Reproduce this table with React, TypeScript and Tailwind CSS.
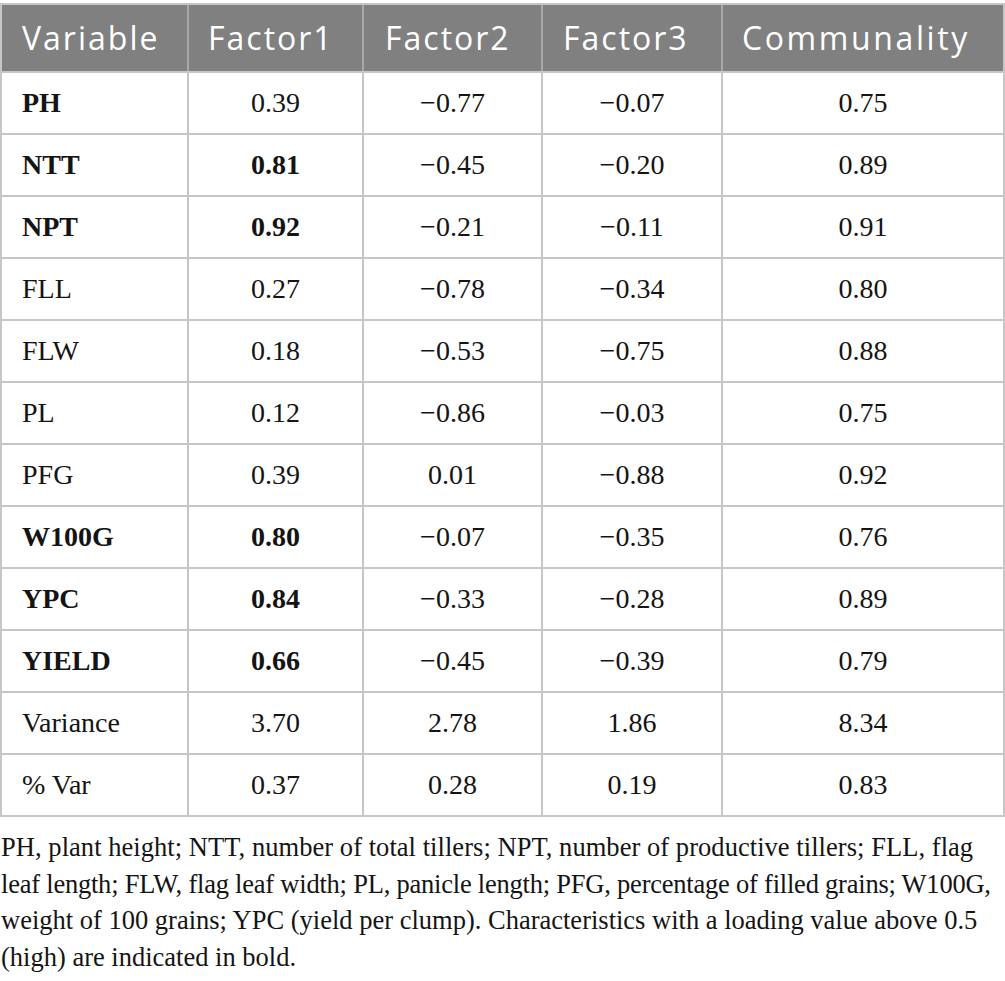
import React from "react";

type Row = { v: string; bold?: boolean; f1: string; f1b?: boolean; f2: string; f3: string; c: string };

const rows: Row[] = [
  { v: "PH", bold: true, f1: "0.39", f2: "\u22120.77", f3: "\u22120.07", c: "0.75" },
  { v: "NTT", bold: true, f1: "0.81", f1b: true, f2: "\u22120.45", f3: "\u22120.20", c: "0.89" },
  { v: "NPT", bold: true, f1: "0.92", f1b: true, f2: "\u22120.21", f3: "\u22120.11", c: "0.91" },
  { v: "FLL", f1: "0.27", f2: "\u22120.78", f3: "\u22120.34", c: "0.80" },
  { v: "FLW", f1: "0.18", f2: "\u22120.53", f3: "\u22120.75", c: "0.88" },
  { v: "PL", f1: "0.12", f2: "\u22120.86", f3: "\u22120.03", c: "0.75" },
  { v: "PFG", f1: "0.39", f2: "0.01", f3: "\u22120.88", c: "0.92" },
  { v: "W100G", bold: true, f1: "0.80", f1b: true, f2: "\u22120.07", f3: "\u22120.35", c: "0.76" },
  { v: "YPC", bold: true, f1: "0.84", f1b: true, f2: "\u22120.33", f3: "\u22120.28", c: "0.89" },
  { v: "YIELD", bold: true, f1: "0.66", f1b: true, f2: "\u22120.45", f3: "\u22120.39", c: "0.79" },
  { v: "Variance", f1: "3.70", f2: "2.78", f3: "1.86", c: "8.34" },
  { v: "% Var", f1: "0.37", f2: "0.28", f3: "0.19", c: "0.83" },
];

const serif = "font-['Liberation_Serif',serif]";

export default function App() {
  return (
    <div className="w-[1005px] bg-white pt-[3px]">
      <div className="border-l-2 border-t-2 border-[#c6c6c6]">
        <div className="flex h-[68px] border-b-2 border-[#c6c6c6] bg-[#808080] text-white font-['Open_Sans',sans-serif] text-[32px] tracking-[2px]">
          <div className="w-[187px] flex items-center pl-[20px] border-r-2 border-[#a8a8a8]">Variable</div>
          <div className="w-[175px] flex items-center pl-[19px] border-r-2 border-[#a8a8a8]">Factor1</div>
          <div className="w-[179px] flex items-center pl-[21px] border-r-2 border-[#a8a8a8]">Factor2</div>
          <div className="w-[180px] flex items-center pl-[20px] border-r-2 border-[#a8a8a8]">Factor3</div>
          <div className="w-[282px] flex items-center pl-[19px] border-r-2 border-[#c6c6c6] tracking-[2.6px]">Communality</div>
        </div>
        {rows.map((r) => (
          <div key={r.v} className={`flex h-[62px] border-b-2 border-[#c6c6c6] text-[28px] text-[#141414] ${serif}`}>
            <div className={`w-[187px] flex items-center pl-[20px] border-r-2 border-[#c6c6c6] ${r.bold ? "font-bold" : ""}`}>{r.v}</div>
            <div className={`w-[175px] flex items-center justify-center border-r-2 border-[#c6c6c6] ${r.f1b ? "font-bold" : ""}`}>{r.f1}</div>
            <div className="w-[179px] flex items-center justify-center border-r-2 border-[#c6c6c6]">{r.f2}</div>
            <div className="w-[180px] flex items-center justify-center border-r-2 border-[#c6c6c6]">{r.f3}</div>
            <div className="w-[282px] flex items-center justify-center border-r-2 border-[#c6c6c6]">{r.c}</div>
          </div>
        ))}
      </div>
      <div className={`mt-[12px] pl-[1px] text-[26.5px] leading-[36.7px] text-[#141414] ${serif}`}>
        <div className="whitespace-nowrap tracking-[0.05px]">PH, plant height; NTT, number of total tillers; NPT, number of productive tillers; FLL, flag</div>
        <div className="whitespace-nowrap tracking-[-0.22px]">leaf length; FLW, flag leaf width; PL, panicle length; PFG, percentage of filled grains; W100G,</div>
        <div className="whitespace-nowrap">weight of 100 grains; YPC (yield per clump). Characteristics with a loading value above 0.5</div>
        <div className="whitespace-nowrap">(high) are indicated in bold.</div>
      </div>
    </div>
  );
}
